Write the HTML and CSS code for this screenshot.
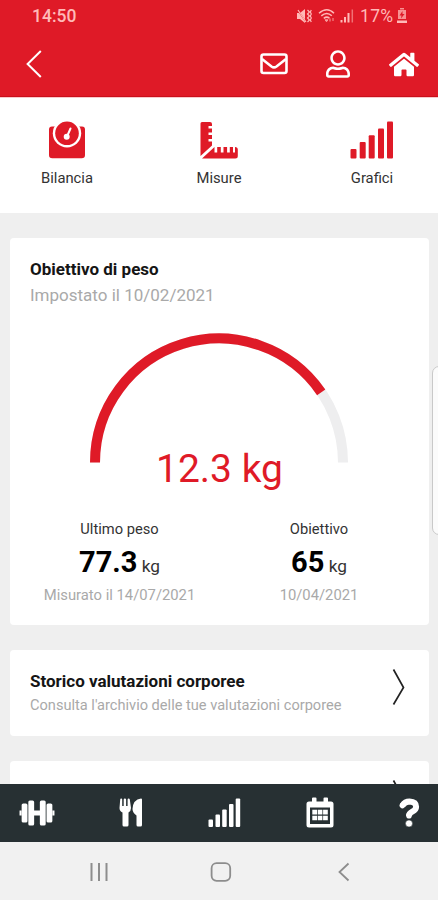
FILE: index.html
```html
<!DOCTYPE html>
<html lang="it">
<head>
<meta charset="utf-8">
<meta name="viewport" content="width=device-width">
<title>Obiettivo di peso</title>
<link rel="stylesheet" href="styles.css">
</head>
<body>
<div class="app">
  <header class="header">
    <div class="status">
      <span class="clock">14:50</span>
      <svg class="status-icons" width="60" height="18" viewBox="0 0 60 18" fill="none" stroke="currentColor">
        <path d="M1 6h3l5-4v14l-5-4H1z" fill="currentColor" stroke="none"/>
        <path d="M1 2l9 13" stroke="#df1a27" stroke-width="1.3"/>
        <path d="M2 3l8 12M11.500 3l2 2-2 2 2 2-2 2 2 2-2 2M15.300 3l-1 2 1 2-1 2 1 2-1 2 1 2" stroke-width="1.200"/>
        <path d="M23 6.200q8-7 15 0M25.300 8.800q5.500-4.600 10.500 0M27.800 11.300q3-2.400 5.700 0" stroke-width="1.500"/>
        <path d="M29 12.800h3l-1.500 2zM34 11.500v3M37 11v3" stroke-width="1" fill="currentColor" opacity=".8"/>
        <path d="M45.500 13v2.500M49 10v5.500M52.500 6v9.500" stroke-width="2"/>
        <path d="M56.300 2.500v13" stroke-width="1.500" opacity=".55"/>
      </svg>
      <span class="percent">17%</span>
      <svg class="battery" width="10" height="16" viewBox="0 0 10 16" fill="currentColor">
        <path d="M3 0h4v1.500H3zM1 2h8v9H1z" opacity=".75"/><path d="M0 12.500h10V15H0z"/>
        <path d="M5.500 3L2.500 7.500h2L4 10.500l3.500-4.500h-2z" fill="#df1a27"/>
      </svg>
    </div>
    <div class="toolbar">
      <svg class="back" width="16" height="28" viewBox="0 0 16 28" fill="none" stroke="currentColor" stroke-width="2"><path d="M14.800 1L1.600 14l13.200 13"/></svg>
      <svg class="mail" width="28" height="22" viewBox="0 0 28 22" fill="none" stroke="currentColor" stroke-width="2.600" stroke-linejoin="round"><rect x="1.500" y="1.500" width="25" height="18.500" rx="2"/><path d="M2 6l9.500 7.500q2.500 1.800 5 0L26 6"/></svg>
      <svg class="user" width="24" height="28" viewBox="0 0 448 512" fill="currentColor"><path d="M313.600 304c-28.700 0-42.500 16-89.600 16-47.100 0-60.800-16-89.600-16C60.200 304 0 364.200 0 438.400V464c0 26.500 21.500 48 48 48h352c26.500 0 48-21.500 48-48v-25.600c0-74.200-60.200-134.400-134.400-134.400zM400 464H48v-25.600c0-47.600 38.800-86.400 86.400-86.400 14.600 0 38.300 16 89.600 16 51.700 0 74.900-16 89.600-16 47.600 0 86.400 38.800 86.400 86.400V464zM224 288c79.500 0 144-64.500 144-144S303.500 0 224 0 80 64.500 80 144s64.500 144 144 144zm0-240c52.900 0 96 43.100 96 96s-43.100 96-96 96-96-43.100-96-96 43.100-96 96-96z"/></svg>
      <svg class="home" width="30" height="27" viewBox="0 0 576 512" fill="currentColor"><path d="M280.370 148.260L96 300.110V464a16 16 0 0 0 16 16l112.060-.29a16 16 0 0 0 15.920-16V368a16 16 0 0 1 16-16h64a16 16 0 0 1 16 16v95.640a16 16 0 0 0 16 16.050L464 480a16 16 0 0 0 16-16V300L295.670 148.260a12.190 12.190 0 0 0-15.300 0zM571.600 251.470L488 182.560V44.050a12 12 0 0 0-12-12h-56a12 12 0 0 0-12 12v72.610L318.470 43a48 48 0 0 0-61 0L4.340 251.470a12 12 0 0 0-1.600 16.900l25.500 31A12 12 0 0 0 45.150 301l235.220-193.740a12.190 12.190 0 0 1 15.300 0L530.900 301a12 12 0 0 0 16.900-1.600l25.500-31a12 12 0 0 0-1.700-16.930z"/></svg>
    </div>
  </header>

  <nav class="sections">
    <a class="section">
      <svg width="38" height="38" viewBox="0 0 38 38"><path d="M4 5.500h30q3 0 3 3V34q0 3.300-3.300 3.300H4.300Q1 37.300 1 34V8.500q0-3 3-3z" fill="#df1a27"/><circle cx="19" cy="12.300" r="14.200" fill="#fff"/><circle cx="19" cy="12.300" r="11.800" fill="#df1a27"/><path d="M22.500 7.500L19 15.500" stroke="#fff" stroke-width="2" stroke-linecap="round"/><circle cx="18.700" cy="15.700" r="3" fill="#fff"/></svg>
      <span>Bilancia</span>
    </a>
    <a class="section">
      <svg width="38" height="38" viewBox="0 0 38 38" fill="#df1a27"><path d="M2 1h8q2 0 2 2v2H8.500v2.500H12v4H8.500V14H12v4H8.500v2.500H12v4L.500 35V2.500Q.500 1 2 1z"/><path d="M2 37.500L14.500 26v5.500h2.700V26h3.600v5.500h2.700V26h3.600v5.500h2.700V26H33v5.500h2V26q2.800 0 2.800 2.500v6.500q0 2.500-2.500 2.500z"/></svg>
      <span>Misure</span>
    </a>
    <a class="section charts">
      <svg width="44" height="38" viewBox="0 0 44 38" fill="#df1a27"><rect x="0.500" y="28" width="6" height="9.500" rx="1"/><rect x="9.700" y="21" width="6" height="16.500" rx="1"/><rect x="18.700" y="14.300" width="6" height="23.200" rx="1"/><rect x="28" y="7.500" width="6" height="30" rx="1"/><rect x="37" y="0.500" width="6" height="37" rx="1"/></svg>
      <span>Grafici</span>
    </a>
  </nav>

  <main class="content">
    <section class="card goal">
      <h2 class="title">Obiettivo di peso</h2>
      <p class="subtitle">Impostato il 10/02/2021</p>
      <div class="gauge">
        <svg width="258" height="130" viewBox="0 0 258 130" fill="none" stroke-width="10"><path d="M5 129.500a124 124 0 0 1 248 0" stroke="#eeeeef"/><path d="M5 129.500A124 124 0 0 1 231.200 59.300" stroke="#df1a27"/></svg>
        <div class="gauge-value">12.3 kg</div>
      </div>
      <div class="weights">
        <div class="weight">
          <div class="label">Ultimo peso</div>
          <div class="value"><b>77.3</b> kg</div>
          <div class="date">Misurato il 14/07/2021</div>
        </div>
        <div class="weight">
          <div class="label">Obiettivo</div>
          <div class="value"><b>65</b> kg</div>
          <div class="date">10/04/2021</div>
        </div>
      </div>
    </section>
    <section class="card link">
      <div>
        <h2 class="title history">Storico valutazioni corporee</h2>
        <p class="hint">Consulta l'archivio delle tue valutazioni corporee</p>
      </div>
      <svg class="chevron" width="14" height="38" viewBox="0 0 14 38" fill="none" stroke="#222" stroke-width="1.700"><path d="M1.500 1.500l10 18-10 17"/></svg>
    </section>
    <section class="card link">
      <svg class="chevron" width="14" height="38" viewBox="0 0 14 38" fill="none" stroke="#222" stroke-width="1.700"><path d="M1.500 1.500l10 18-10 17"/></svg>
    </section>
  </main>

  <nav class="tabs">
    <svg width="36" height="26" viewBox="0.500 0 34 26" preserveAspectRatio="none" fill="#fff"><rect x="3" y="3.500" width="5.500" height="19" rx="1.500"/><rect x="9.300" y="0.500" width="5.500" height="25" rx="1.500"/><rect x="20.200" y="0.500" width="5.500" height="25" rx="1.500"/><rect x="26.500" y="3.500" width="5.500" height="19" rx="1.500"/><path d="M1 10.500h2v5H1zM14 10.500h7v5h-7zM32 10.500h2v5h-2z"/></svg>
    <svg class="meals" width="24" height="30" viewBox="0 0 24 30" fill="#fff"><path d="M1.200 1.500q0-1 1-1t1 1V8h1.500V1.500q0-1 1.200-1t1.200 1V8h1.500V1.500q0-1 1-1t1.200 1L12 10q0 3-2.500 4.500V27q0 1.500-1.500 1.500H5Q3.500 28.500 3.500 27V14.500Q.500 13 .500 10z"/><path d="M22 .500q1 0 1 1V27q0 1.500-1.500 1.500H19q-1.500 0-1.500-1.500v-9.500q-4-3-4-6.500Q14 1.500 22 .500z"/></svg>
    <svg class="stats" width="33" height="30" viewBox="0 0 33 30" fill="#fff"><rect x="0.500" y="21.500" width="4.500" height="7.500" rx="1"/><rect x="7.500" y="16.500" width="4.500" height="12.500" rx="1"/><rect x="14.200" y="11.500" width="4.500" height="17.500" rx="1"/><rect x="21" y="6" width="4.500" height="23" rx="1"/><rect x="27.700" y="0.500" width="4.500" height="28.500" rx="1"/></svg>
    <svg width="28" height="32" viewBox="0 0 28 32"><path d="M3 4.500h3V1.500q0-1 1-1h2.500q1 0 1 1v3h7v-3q0-1 1-1H21q1 0 1 1v3h3q2.500 0 2.500 2.500v21q0 2.500-2.500 2.500H3Q.500 30.500.500 28V7Q.500 4.500 3 4.500zM4 10.500v16.500h20V10.500z" fill="#fff" fill-rule="evenodd"/><path d="M6.300 12.800h4.700v4.600H6.300zM11.700 12.800h4.700v4.600h-4.700zM17.100 12.800h4.700v4.600h-4.700zM6.300 18.700h4.700v4.600H6.300zM11.700 18.700h4.700v4.600h-4.700zM17.100 18.700h4.700v4.600h-4.700z" fill="#fff"/></svg>
    <svg width="21" height="30" viewBox="0 0 21 30"><path d="M3.400 7.500Q6 3.400 10.500 3.400q6.600.300 6.600 5.300 0 3-3.800 5-3.300 1.700-3.300 4.200" fill="none" stroke="#fff" stroke-width="6" stroke-linejoin="round"/><path d="M3.400 7.500l.300-.300M10 17.500v.300" stroke="#fff" stroke-width="5.600" stroke-linecap="round"/><circle cx="10" cy="25.500" r="3.600" fill="#fff" stroke="#273033" stroke-width=".6"/></svg>
  </nav>

  <footer class="system">
    <svg width="20" height="20" viewBox="0 0 20 20" stroke="#8d8d8d" stroke-width="2"><path d="M2.500 1v18M10 1v18M17.500 1v18"/></svg>
    <svg class="home-key" width="22" height="20" viewBox="0 0 22 20" fill="none" stroke="#8d8d8d" stroke-width="1.800"><rect x="1.600" y="1.200" width="18.600" height="17.600" rx="5"/></svg>
    <svg width="12" height="20" viewBox="0 0 12 20" fill="none" stroke="#8d8d8d" stroke-width="1.800"><path d="M10.500 1.500L1.500 10l9 8.500"/></svg>
  </footer>
  <div class="edge-handle"></div>
</div>
</body>
</html>
```
FILE: styles.css
```css
* { box-sizing: border-box; }
body, h2, p { margin: 0; }
body { font-family: Roboto, "Liberation Sans", sans-serif; background: #efefef; }
svg { display: block; flex: none; }

.app {
  position: relative;
  width: 438px;
  height: 900px;
  overflow: hidden;
  display: grid;
  grid-template-rows: 98px 115px 571px 58px 58px;
}

.header {
  background: #df1a27;
  color: #fff;
  border-bottom: 1px solid #f9c9cc;
  box-shadow: inset 0 -1px #c9101b;
}
.status { display: flex; height: 32px; align-items: center; padding-left: 32px; color: #ffb9b7; }
.clock { width: 264px; font-size: 17.5px; font-weight: 500; }
.status-icons { width: 60px; }
.percent { width: 41px; padding-left: 4px; font-size: 17.5px; letter-spacing: 0.3px; }
.toolbar { display: flex; height: 64px; align-items: center; padding-left: 26px; }
.mail { margin-left: 218px; }
.user { margin-left: 38px; }
.home { margin-left: 39px; }

.sections { display: grid; grid-template-columns: 134px 170px 134px; background: #fff; padding-top: 23px; }
.section { display: flex; flex-direction: column; align-items: center; gap: 10px; font-size: 14.8px; line-height: 18px; color: #333; }
.charts { padding-left: 2px; }

.content { padding: 25px 9px 0 10px; display: flex; flex-direction: column; gap: 25px; overflow: hidden; }
.card { background: #fff; border-radius: 4px; padding: 0 20px; flex: none; }
.goal { height: 387px; padding-top: 20px; }
.title { font-size: 17px; line-height: 22px; font-weight: 700; color: #151515; }
.subtitle { font-size: 17px; line-height: 22px; margin-top: 4px; color: #a9a9a9; }
.gauge { display: flex; flex-direction: column; align-items: center; margin: 27px 2px 0 0; }
.gauge-value { margin-top: -17px; padding-left: 2px; font-size: 39px; line-height: 46px; color: #df1a27; }
.weights { display: grid; grid-template-columns: 179px 220px; margin: 28px -20px 0 0; text-align: center; }
.label { font-size: 14.7px; line-height: 18px; color: #333; }
.value { font-size: 17.3px; line-height: 36px; margin-top: 6px; color: #333; }
.value b { font-size: 29px; color: #000; }
.date { font-size: 14.8px; line-height: 18px; margin-top: 2px; color: #a9a9a9; }
.link { height: 86px; display: flex; justify-content: space-between; padding-top: 18px; }
.link .chevron { margin: 0 3px 0 auto; }
.title.history { line-height: 24px; margin: 1px 0; }
.hint { font-size: 14.6px; line-height: 22px; color: #a9a9a9; }

.tabs { display: flex; align-items: center; justify-content: space-between; padding: 0 18px 0 19px; background: #273033; }
.meals { margin: 0 1px 0 -1px; }
.stats { margin: 0 1px 0 -1px; }
.system { display: flex; align-items: center; justify-content: space-between; padding: 1px 88px 0 89px; background: #f1f1f1; }
.home-key { margin: 0 5px 0 0; }

.edge-handle {
  position: absolute;
  left: 432px;
  top: 366px;
  width: 14px;
  height: 169px;
  background: #fbfbfb;
  border: 1px solid #c9c9c9;
  border-radius: 7px;
}
```
